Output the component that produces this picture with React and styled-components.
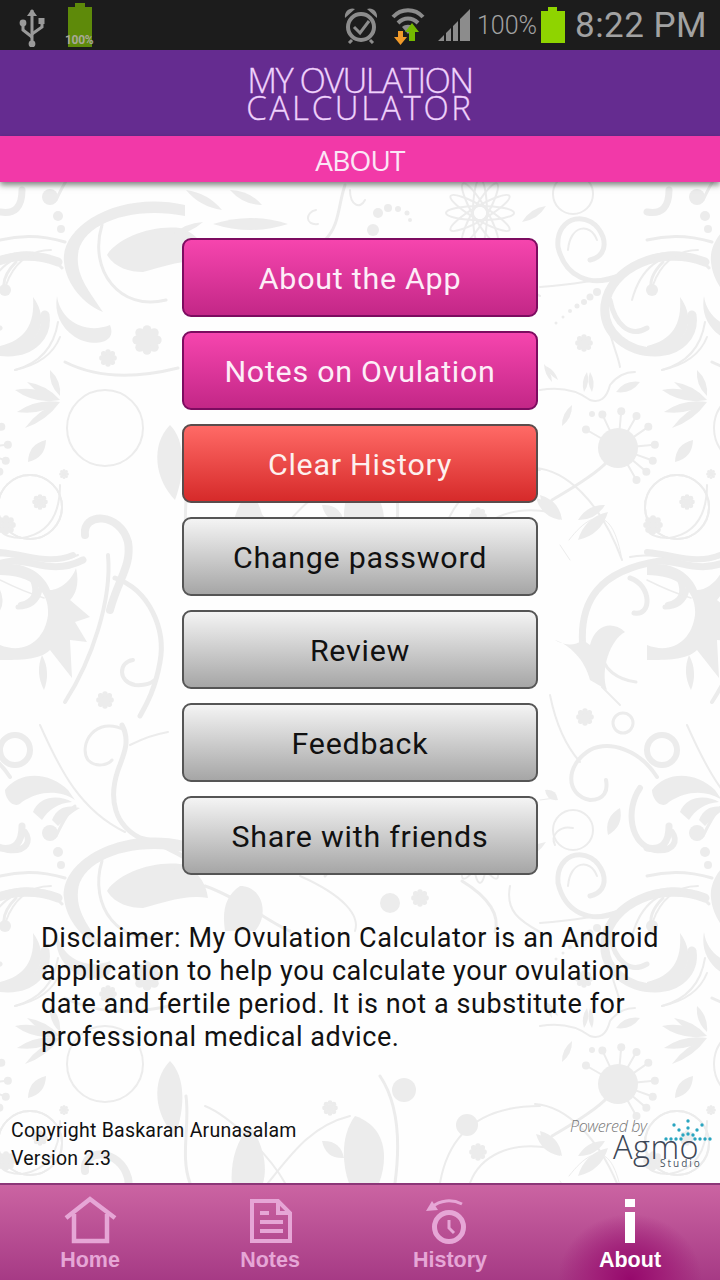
import React from "react";
import styled, { createGlobalStyle } from "styled-components";

const Global = createGlobalStyle`
  html, body { margin: 0; padding: 0; background: #fff; }
  * { box-sizing: border-box; }
`;

const Page = styled.div`
  width: 720px;
  height: 1280px;
  display: flex;
  flex-direction: column;
  overflow: hidden;
  font-family: Roboto, "Liberation Sans", sans-serif;
`;

const StatusBar = styled.div`
  height: 50px;
  background: #1c1c1c;
  display: flex;
  align-items: center;
  padding: 0 13px 0 16px;
  color: #a2a2a2;
`;
const StatusLeft = styled.div`
  display: flex;
  align-items: center;
  gap: 18px;
  flex: 1;
`;
const StatusRight = styled.div`
  display: flex;
  align-items: center;
`;
const StatusSlot = styled.span`
  display: flex;
  margin-left: ${({ $gap }) => $gap}px;
`;
const DimBattery = styled.div`
  position: relative;
  width: 32px;
  height: 44px;
`;
const DimLabel = styled.span`
  position: absolute;
  left: 1px;
  bottom: 0;
  font-size: 12px;
  line-height: 14px;
  font-weight: 700;
  color: #a8a898;
  letter-spacing: -0.3px;
`;
const Percent = styled.span`
  font-size: 25px;
  margin: 0 4px 0 6px;
  font-weight: 300;
`;
const Clock = styled.span`
  font-size: 35px;
  margin-left: 10px;
  letter-spacing: 0.45px;
`;

const Brand = styled.div`
  height: 86px;
  background: #652c90;
  display: flex;
  flex-direction: column;
  align-items: center;
  padding-top: 16px;
  font-family: "Open Sans", sans-serif;
  font-weight: 300;
  color: #f0d2fc;
`;
const BrandLine = styled.div`
  font-size: ${({ $size }) => $size}px;
  letter-spacing: ${({ $spacing }) => $spacing}px;
  line-height: 28px;
  white-space: nowrap;
  -webkit-text-stroke: 0.3px #f0d2fc;
`;
const SectionBar = styled.div`
  position: relative;
  z-index: 2;
  height: 46px;
  padding-top: 1px;
  background: #f239a8;
  box-shadow: 0 3px 6px rgba(20, 30, 20, 0.55);
  display: flex;
  align-items: center;
  justify-content: center;
  color: #fbe6f6;
  font-family: "Open Sans", sans-serif;
  font-size: 28px;
  letter-spacing: -0.8px;
`;

const Main = styled.div`
  position: relative;
  flex: 1;
  background: #fefefe;
  display: flex;
  flex-direction: column;
  overflow: hidden;
`;
const Pattern = styled.svg`
  position: absolute;
  top: 0;
  left: 0;
`;
const Content = styled.div`
  position: relative;
  flex: 1;
  display: flex;
  flex-direction: column;
`;
const ButtonList = styled.div`
  display: flex;
  flex-direction: column;
  align-items: center;
  gap: 14px;
  padding-top: 56px;
`;

const KINDS = {
  pink: { top: "#f645ae", bottom: "#c32787", border: "#7c0c60", text: "#fdeef8" },
  red: { top: "#ff6a66", bottom: "#d62a2a", border: "#5a4c4c", text: "#fdf0ee" },
  grey: { top: "#f4f4f4", bottom: "#a6a6a6", border: "#555555", text: "#111111" },
};

const Button = styled.button`
  width: 356px;
  height: 79px;
  padding: 2px 0 0;
  border: 2px solid ${({ $kind }) => KINDS[$kind].border};
  border-radius: 9px;
  background: linear-gradient(
    ${({ $kind }) => KINDS[$kind].top},
    ${({ $kind }) => KINDS[$kind].bottom}
  );
  color: ${({ $kind }) => KINDS[$kind].text};
  font-family: Roboto, sans-serif;
  font-size: 30.4px;
  letter-spacing: 0.75px;
`;

const Disclaimer = styled.p`
  margin: 47px 0 0;
  padding: 0 40px 0 41px;
  font-size: 27px;
  line-height: 33px;
  letter-spacing: 0.57px;
  color: #111;
`;
const Footer = styled.div`
  margin-top: auto;
  display: flex;
  justify-content: space-between;
  align-items: flex-end;
  padding: 0 10px 10px 11px;
`;
const Credits = styled.div`
  font-size: 19.5px;
  line-height: 28px;
  letter-spacing: 0.25px;
  color: #111;
`;
const Logo = styled.div`
  position: relative;
  width: 140px;
  height: 60px;
  font-family: "Open Sans", sans-serif;
`;
const Powered = styled.span`
  position: absolute;
  left: 0;
  top: 4px;
  font-size: 16px;
  line-height: 18px;
  font-style: italic;
  font-weight: 300;
  color: #777;
  letter-spacing: -0.35px;
  white-space: nowrap;
`;
const Agmo = styled.span`
  position: absolute;
  left: 43px;
  top: 23px;
  font-size: 32.5px;
  line-height: 22px;
  font-weight: 300;
  color: #3d4757;
  letter-spacing: 0.5px;
`;
const Studio = styled.span`
  position: absolute;
  left: 90px;
  top: 46px;
  font-size: 10px;
  line-height: 9px;
  letter-spacing: 2px;
  color: #4a5563;
`;
const Sparks = styled.svg`
  position: absolute;
  left: 88px;
  top: 0;
`;

const TabBar = styled.nav`
  height: 97px;
  display: grid;
  grid-template-columns: repeat(4, 1fr);
  border-top: 2px solid #8c3778;
  background: linear-gradient(#cb64a2, #a63a85);
`;
const Tab = styled.div`
  display: flex;
  flex-direction: column;
  align-items: center;
  padding-top: 11px;
  color: ${({ $active }) => ($active ? "#fff" : "#e6a6d6")};
  background: ${({ $active }) =>
    $active
      ? "radial-gradient(ellipse 72px 66px at 50% 100%, #96086c 0%, #a01f78 45%, rgba(166,58,133,0) 100%)"
      : "none"};
`;
const TabLabel = styled.span`
  margin-top: 2px;
  font-family: "Liberation Sans", sans-serif;
  font-weight: 700;
  font-size: 21.5px;
  line-height: 24px;
`;

const leaf = (x1, y1, x2, y2, w) => {
  const mx = (x1 + x2) / 2;
  const my = (y1 + y2) / 2;
  const dx = x2 - x1;
  const dy = y2 - y1;
  const len = Math.hypot(dx, dy) || 1;
  const nx = (-dy / len) * w;
  const ny = (dx / len) * w;
  return `M${x1},${y1}Q${mx + nx},${my + ny} ${x2},${y2}Q${mx - nx},${my - ny} ${x1},${y1}Z`;
};

const LINES = [
  ["M0,212 Q22,216 22,190", 7],
  ["M56,200 Q68,175 75,170", 3],
  ["M102,225 C88,270 120,312 166,300", 3],
  ["M0,240 Q32,232 65,242", 3],
  ["M0,258 Q40,244 62,268", 3],
  ["M16,262 Q0,278 5,292", 3],
  ["M15,370 Q52,360 58,322", 2],
  ["M65,362 Q110,385 178,368", 3],
  ["M60,485 Q60,532 22,538 Q5,538 0,530", 2],
  ["M85,535 C82,512 120,512 128,542 C132,565 118,580 110,610", 8],
  ["M108,555 C112,600 92,660 65,702", 4],
  ["M115,578 C150,590 166,630 160,662 C155,690 146,705 140,716", 5],
  ["M133,660 C118,662 118,682 135,685 Q148,686 155,680", 4],
  ["M0,552 C30,555 50,565 73,555", 6],
  ["M0,580 C20,590 34,595 44,598", 1.5],
  ["M40,590 Q36,607 18,607", 5],
  ["M40,725 C60,770 80,810 125,832", 2],
  ["M125,730 C95,715 78,745 88,760 C96,768 108,765 112,760", 3],
  ["M122,725 C130,740 125,752 118,770 C108,800 115,825 140,838 C160,842 170,850 190,860", 5],
  ["M130,745 Q150,735 168,732", 2],
  ["M617,277 C590,287 565,277 558,247 C555,215 592,208 603,237 C607,250 600,258 590,260", 5],
  ["M568,250 C570,225 590,222 597,240", 2],
  ["M540,287 Q590,283 617,275", 2],
  ["M705,262 C660,245 610,268 605,305 C602,335 630,352 655,352 C680,352 695,335 692,315", 9],
  ["M694,255 C660,250 640,270 632,300", 2],
  ["M698,250 C675,250 660,265 653,285", 2],
  ["M610,300 C615,325 630,338 647,328", 5],
  ["M605,315 C612,345 618,355 620,367", 2],
  ["M662,370 C685,365 700,355 707,337", 2],
  ["M540,390 Q570,385 590,400 Q605,405 610,385 Q620,372 635,372", 2],
  ["M552,500 Q595,475 607,462", 3],
  ["M570,560 L560,545", 1],
  ["M535,468 C565,470 600,500 622,560", 2],
  ["M569,540 C600,500 615,520 622,560", 1],
  ["M583,650 C578,600 600,570 660,561 C680,560 700,575 730,560", 7],
  ["M630,557 C660,550 690,570 725,555", 2],
  ["M630,578 C652,585 652,617 634,613", 5],
  ["M680,580 Q688,600 668,605", 6],
  ["M603,650 C600,670 620,680 636,682", 3],
  ["M602,687 L620,705", 2],
  ["M550,695 C555,720 565,745 580,762", 2],
  ["M657,777 C640,750 610,740 590,750 C565,765 565,795 590,800 C605,800 608,790 606,780", 4],
  ["M540,800 L555,798", 1],
  ["M640,788 C625,810 630,845 655,850 C675,852 678,840 672,832", 6],
  ["M573,828 C560,825 550,835 555,845", 2],
  ["M345,185 C338,205 340,225 325,240", 3],
  ["M316,210 C305,212 305,226 318,224", 2],
  ["M350,190 C350,205 360,210 365,200", 2],
  ["M440,547 C450,490 490,470 540,470", 2],
  ["M470,547 C480,520 510,505 550,512", 2],
  ["M268,547 C290,520 310,490 350,480", 2],
  ["M205,470 C230,480 270,520 285,547", 2],
  ["M380,440 C400,470 400,510 395,547", 3],
  ["M186,460 C190,490 180,520 190,547", 3],
  ["M205,250 C240,262 275,290 290,295", 3],
  ["M300,240 C345,260 360,280 355,295", 2],
  ["M462,245 C490,262 500,280 495,296", 3],
  ["M510,250 C505,275 520,285 540,296", 2],
];

const BLOBS = [
  "M185,205 C120,190 60,225 64,262 C66,285 85,305 103,312 C88,290 76,275 78,255 C80,225 130,205 185,216Z",
  "M107,255 C118,238 150,225 180,228 C195,232 206,245 208,262 C185,258 160,268 143,272 C130,272 115,268 107,255Z",
  "M33,297 C50,320 42,348 0,353 L0,346 C25,340 35,325 33,297Z",
  "M57,296 C60,320 85,335 110,325 C118,345 90,347 75,337 C60,327 54,312 57,296Z",
  "M0,565 C25,560 45,575 50,590 C60,590 72,580 76,568 C80,585 75,595 70,600 L90,617 L75,622 L87,642 L70,640 L72,678 L50,650 C40,660 20,660 0,660 L0,645 C25,655 45,640 48,615 C50,590 30,575 0,575Z",
  "M5,790 C20,770 50,772 68,790 L75,800 C60,790 40,790 22,802 C15,810 5,800 5,790Z",
  "M33,812 C40,795 60,795 72,802 C58,803 48,810 42,820Z",
  "M52,820 C58,805 70,805 80,808 C72,812 66,818 58,826Z",
  "M170,425 C185,440 186,470 175,500 C155,480 150,445 170,425Z",
  "M240,250 C262,250 270,278 255,295 L225,295 C222,275 225,260 240,250Z",
  "M583,640 C570,650 555,640 555,640 C570,645 585,660 590,680 L607,690 C600,670 610,640 625,632 C612,620 595,625 590,645Z",
  "M250,490 C265,510 268,535 262,550 L232,550 C230,530 235,505 250,490Z",
  "M355,480 C385,490 390,520 378,550 L350,550 C342,530 340,500 355,480Z",
];

const LEAVES = [
  [60, 400, 15, 390, 10], [60, 400, 27, 382, 7], [60, 396, 50, 370, 7],
  [60, 402, 17, 412, 9], [60, 402, 25, 428, 7],
  [46, 440, 28, 462, 11], [42, 655, 44, 690, 8],
  [552, 382, 544, 364, 4], [558, 380, 546, 366, 4],
  [587, 372, 584, 392, 5], [590, 372, 592, 392, 5],
  [616, 392, 640, 382, 8], [562, 426, 572, 405, 6],
  [540, 495, 562, 520, 11], [578, 540, 608, 512, 12],
  [608, 835, 620, 808, 11], [545, 790, 558, 800, 8],
  [172, 235, 203, 222, 6], [186, 190, 222, 210, 8], [230, 190, 262, 205, 8],
  [213, 224, 288, 224, 12], [522, 222, 546, 206, 7],
  [322, 505, 344, 522, 12], [536, 498, 560, 520, 10],
  [578, 520, 605, 505, 9],
];

const RINGS = [
  [105, 428, 38, 2], [15, 750, 15, 6], [623, 723, 10, 3],
  [677, 507, 32, 2], [30, 507, 32, 2],
  [573, 194, 20, 2],
];

const DOTS = [
  [50, 197, 8], [58, 216, 5], [61, 229, 4], [5, 290, 6],
  [618, 448, 20], [373, 230, 6], [378, 213, 5], [388, 208, 4],
  [398, 209, 3], [407, 213, 2.5], [410, 220, 2],
  [597, 292, 4], [590, 297, 3.5], [584, 302, 3], [577, 306, 2.5],
  [570, 311, 2], [563, 317, 1.5], [556, 323, 1.5],
  [404, 454, 12], [467, 489, 11], [390, 267, 10], [592, 414, 3],
];

const FLOWERS = [
  [147, 340, 15], [108, 358, 9], [40, 502, 8], [6, 525, 10], [105, 700, 9],
  [584, 343, 9], [585, 717, 9], [64, 474, 5], [420, 262, 9], [330, 472, 8],
  [478, 516, 9],
];

const STAMENS = [-150, -115, -85, -60, -35, -5, 20, 40, 60];

const Flower = ({ x, y, r }) => (
  <g>
    <circle cx={x} cy={y} r={r * 0.5} />
    {[0, 1, 2, 3, 4, 5, 6, 7].map((i) => {
      const a = (i * Math.PI) / 4;
      return (
        <circle key={i} cx={x + Math.cos(a) * r * 0.68} cy={y + Math.sin(a) * r * 0.68} r={r * 0.3} />
      );
    })}
  </g>
);

const Tile = () => (
  <g>
    <g fill="none" stroke="#ececec" strokeLinecap="round">
      {LINES.map(([d, w], i) => (
        <path key={i} d={d} strokeWidth={w} />
      ))}
      {RINGS.map(([x, y, r, w], i) => (
        <circle key={i} cx={x} cy={y} r={r} strokeWidth={w} />
      ))}
      {STAMENS.map((deg) => {
        const a = (deg * Math.PI) / 180;
        return (
          <line
            key={deg}
            x1={618 + Math.cos(a) * 18}
            y1={448 + Math.sin(a) * 18}
            x2={618 + Math.cos(a) * 36}
            y2={448 + Math.sin(a) * 36}
            strokeWidth="2"
          />
        );
      })}
      {[0, 30, 60, 90, 120, 150].map((deg) => (
        <ellipse key={deg} cx="480" cy="213" rx="34" ry="7" strokeWidth="2" transform={`rotate(${deg} 480 213)`} />
      ))}
    </g>
    <g fill="#ececec">
      {BLOBS.map((d, i) => (
        <path key={i} d={d} />
      ))}
      {LEAVES.map(([a, b, c, d, w], i) => (
        <path key={i} d={leaf(a, b, c, d, w)} />
      ))}
      {DOTS.map(([x, y, r], i) => (
        <circle key={i} cx={x} cy={y} r={r} />
      ))}
      {FLOWERS.map(([x, y, r], i) => (
        <Flower key={i} x={x} y={y} r={r} />
      ))}
      {STAMENS.map((deg) => {
        const a = (deg * Math.PI) / 180;
        return <circle key={deg} cx={618 + Math.cos(a) * 37} cy={448 + Math.sin(a) * 37} r="4" />;
      })}
    </g>
  </g>
);

const OFFSETS = [
  [0, 0], [647, 0], [-647, 0],
  [0, 636], [647, 636], [-647, 636],
];

const Background = () => (
  <Pattern width="720" height="1001" viewBox="0 182 720 1001">
    {OFFSETS.map(([x, y]) => (
      <g key={`${x}-${y}`} transform={`translate(${x} ${y})`}>
        <Tile />
      </g>
    ))}
  </Pattern>
);

const UsbIcon = () => (
  <svg width="30" height="44" viewBox="0 0 30 44">
    <g fill="#9a9a9a" stroke="#9a9a9a">
      <path d="M16,7V40" strokeWidth="3" fill="none" />
      <path d="M16,6l-5,7h10z" stroke="none" />
      <path d="M7,21V27L16,34" strokeWidth="3" fill="none" />
      <path d="M26,20V24L16,31" strokeWidth="3" fill="none" />
      <circle cx="7" cy="20" r="3.4" stroke="none" />
      <rect x="22.5" y="15" width="6" height="6" stroke="none" />
      <circle cx="16" cy="41" r="3.4" stroke="none" />
    </g>
  </svg>
);

const AlarmIcon = () => (
  <svg width="34" height="38" viewBox="0 0 34 38">
    <g fill="none" stroke="#8c8c8c">
      <circle cx="17" cy="21" r="13" strokeWidth="4" />
      <path d="M10,21l6,6l9,-12" strokeWidth="3" />
      <path d="M8,34l-3,3M26,34l3,3" strokeWidth="3" />
    </g>
    <path d="M1,12C0,5 6,1 11,3zM33,12C34,5 28,1 23,3z" fill="#8c8c8c" />
  </svg>
);

const WifiIcon = () => (
  <svg width="34" height="40" viewBox="0 0 34 40">
    <g fill="none" stroke="#8c8c8c" strokeWidth="4">
      <path d="M2,12C10,3 24,3 32,12" />
      <path d="M7,18C13,12 21,12 27,18" />
    </g>
    <path d="M11,22C14,19 20,19 23,22L17,29z" fill="#8c8c8c" />
    <path d="M7,26h5v6h4l-6.500,8l-6.500,-8h4z" fill="#f09a2a" />
    <path d="M21,18l7,9h-4v9h-6v-9h-4z" fill="#74b800" />
  </svg>
);

const SignalIcon = () => (
  <svg width="34" height="34" viewBox="0 0 34 34">
    <path d="M1,33L7,27V33zM9,25L14,20V33H9zM16,18L21,13V33H16zM23,11L33,1V33H23z" fill="#8c8c8c" />
  </svg>
);

const BatteryIcon = ({ color }) => (
  <svg width="24" height="36" viewBox="0 0 24 36">
    <path d="M7,0H16V4H24V36H0V4H7z" fill={color} />
  </svg>
);

const HomeIcon = () => (
  <svg width="60" height="50" viewBox="0 0 60 50" fill="none" stroke="currentColor" strokeWidth="4.500">
    <path d="M6,22L30,3L55,22" />
    <path d="M14,18V45H47V18" />
  </svg>
);
const NotesIcon = () => (
  <svg width="60" height="50" viewBox="0 0 60 50" fill="none" stroke="currentColor" strokeWidth="4">
    <path d="M12,5H38L50,17V45H12Z" />
    <path d="M38,5V17H50" />
    <path d="M20,17H29M20,26H43M20,35H43" />
  </svg>
);
const HistoryIcon = () => (
  <svg width="60" height="50" viewBox="0 0 60 50" fill="none" stroke="currentColor">
    <circle cx="29" cy="31" r="14.500" strokeWidth="5" />
    <path d="M29,24V32L34,37" strokeWidth="3" />
    <path d="M42,8C32,3 20,4 12,11" strokeWidth="3" />
    <path d="M6,15L12,5L18,14Z" fill="currentColor" stroke="none" />
  </svg>
);
const InfoIcon = () => (
  <svg width="60" height="50" viewBox="0 0 60 50" fill="currentColor">
    <rect x="25" y="3" width="10" height="8" />
    <rect x="25" y="16" width="10" height="31" />
  </svg>
);

const BUTTONS = [
  ["About the App", "pink"],
  ["Notes on Ovulation", "pink"],
  ["Clear History", "red"],
  ["Change password", "grey"],
  ["Review", "grey"],
  ["Feedback", "grey"],
  ["Share with friends", "grey"],
];

const TABS = [
  ["Home", HomeIcon],
  ["Notes", NotesIcon],
  ["History", HistoryIcon],
  ["About", InfoIcon, true],
];

const SPARKS = [
  [30, 8], [30, 15], [30, 21], [16, 12], [21, 17], [25, 22], [44, 12], [39, 17], [35, 22],
  [8, 26], [13, 26], [18, 26], [23, 26], [37, 26], [42, 26], [47, 26], [52, 26],
];

export default function App() {
  return (
    <Page>
      <Global />
      <StatusBar>
        <StatusLeft>
          <UsbIcon />
          <DimBattery>
            <svg width="32" height="44" viewBox="0 0 32 44">
              <path d="M11,0H21V4H28V44H4V4H11z" fill="#5e8a0a" />
            </svg>
            <DimLabel>100%</DimLabel>
          </DimBattery>
        </StatusLeft>
        <StatusRight>
          <AlarmIcon />
          <StatusSlot $gap={13}>
            <WifiIcon />
          </StatusSlot>
          <StatusSlot $gap={12}>
            <SignalIcon />
          </StatusSlot>
          <Percent>100%</Percent>
          <BatteryIcon color="#8fd400" />
          <Clock>8:22 PM</Clock>
        </StatusRight>
      </StatusBar>
      <Brand>
        <BrandLine $size={34.5} $spacing={-1.6}>MY OVULATION</BrandLine>
        <BrandLine $size={33} $spacing={2.7}>CALCULATOR</BrandLine>
      </Brand>
      <SectionBar>ABOUT</SectionBar>
      <Main>
        <Background />
        <Content>
          <ButtonList>
            {BUTTONS.map(([label, kind]) => (
              <Button key={label} $kind={kind}>{label}</Button>
            ))}
          </ButtonList>
          <Disclaimer>
            Disclaimer: My Ovulation Calculator is an Android application to help you calculate your
            ovulation date and fertile period. It is not a substitute for professional medical advice.
          </Disclaimer>
          <Footer>
            <Credits>
              Copyright Baskaran Arunasalam
              <br />
              Version 2.3
            </Credits>
            <Logo>
              <Powered>Powered by</Powered>
              <Agmo>Agmo</Agmo>
              <Studio>Studio</Studio>
              <Sparks width="60" height="34" viewBox="0 0 60 34">
                {SPARKS.map(([x, y]) => (
                  <circle key={`${x}-${y}`} cx={x} cy={y} r="1.700" fill="#2aa5c0" />
                ))}
              </Sparks>
            </Logo>
          </Footer>
        </Content>
      </Main>
      <TabBar>
        {TABS.map(([label, Icon, active]) => (
          <Tab key={label} $active={active}>
            <Icon />
            <TabLabel>{label}</TabLabel>
          </Tab>
        ))}
      </TabBar>
    </Page>
  );
}
